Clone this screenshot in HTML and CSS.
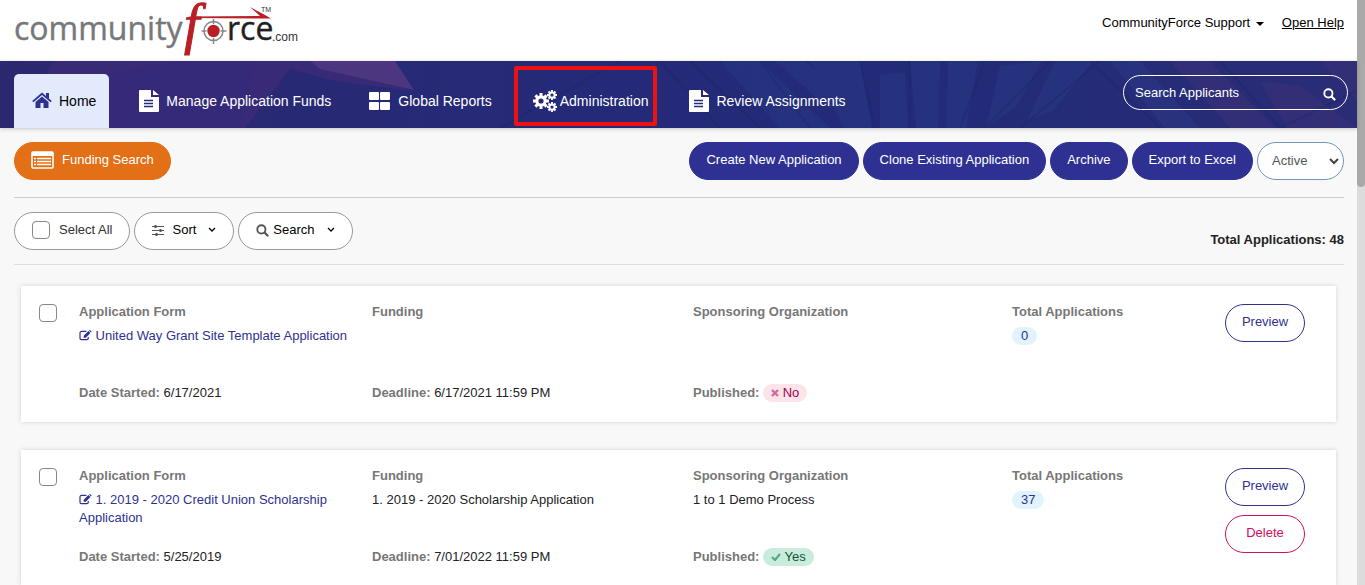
FILE: index.html
```
<!DOCTYPE html>
<html lang="en">
<head>
    <meta charset="UTF-8">
    <meta name="viewport" content="width=device-width, initial-scale=1.0">
    <title>CommunityForce</title>
    <link rel="stylesheet" href="styles.css">
</head>
<body>
    <!-- Shared icons -->
    <svg class="sprite" aria-hidden="true">
        <symbol id="icon-file" viewBox="0 0 20 22">
            <path fill="currentColor" d="M1 0h11v7h8v14a1 1 0 0 1-1 1H1a1 1 0 0 1-1-1V1a1 1 0 0 1 1-1zM14 0l6 5h-6z"/>
            <path stroke="#252a78" stroke-width="1.4" d="M5 10.500h9M5 13.500h9M5 16.500h9"/>
        </symbol>
        <symbol id="icon-search" viewBox="0 0 14 14">
            <circle cx="5.800" cy="5.800" r="4.400" fill="none" stroke="currentColor" stroke-width="2"/>
            <path stroke="currentColor" stroke-width="2.400" stroke-linecap="round" d="M9.400 9.400l3 3"/>
        </symbol>
        <symbol id="icon-chevron" viewBox="0 0 8 6">
            <path fill="none" stroke="currentColor" stroke-width="1.300" d="M1 1l3 3 3-3"/>
        </symbol>
        <symbol id="icon-edit" viewBox="0 0 14 12">
            <path fill="none" stroke="currentColor" stroke-width="1.300" d="M8 1.600H2.500a1.500 1.500 0 0 0-1.500 1.500v6a1.500 1.500 0 0 0 1.500 1.500h6a1.500 1.500 0 0 0 1.500-1.500V7.500"/>
            <path fill="currentColor" d="M10.200 1.200l2.200 2.200L7.300 8.500H5V6.300zM10.900.6l.5-.4q.4-.3.800 0L13.400 1.400q.3.400 0 .8l-.5.500z"/>
        </symbol>
        <symbol id="icon-gear" viewBox="-8 -8 16 16">
            <circle r="4.200" fill="none" stroke="currentColor" stroke-width="3.200"/>
            <path stroke="currentColor" stroke-width="3" d="M0-8v3M0 5v3M-8 0h3M5 0h3M-5.600-5.600l2 2M3.600 3.600l2 2M-5.600 5.600l2-2M3.600-3.600l2-2"/>
        </symbol>
    </svg>

    <div class="page">
        <header class="top-bar">
            <a href="#" class="logo" aria-label="communityforce.com">
                <svg width="290" height="61" viewBox="0 0 290 61">
                    <text class="logo-word" x="0" y="40">community</text>
                    <text class="logo-f" x="170" y="43">f</text>
                    <text class="logo-rce" x="213" y="40">rce</text>
                    <text class="logo-com" x="258" y="41">.com</text>
                    <text class="logo-tm" x="247" y="12">TM</text>
                    <path fill="#b92025" d="M180 16.500l66-.500-10-9 15 8 6 3.500-77-.500z"/>
                    <circle cx="199.500" cy="31" r="9.500" fill="#fff" stroke="#85878a" stroke-width="1.500"/>
                    <path stroke="#85878a" stroke-width="1.500" d="M199.500 19v5M199.500 38v6M187.500 31h5M206.500 31h6"/>
                    <circle cx="199.500" cy="31" r="6.200" fill="#b92025"/>
                </svg>
            </a>
            <div class="user-links">
                <button type="button" class="user-menu">CommunityForce Support <span class="caret"></span></button>
                <a href="#" class="help-link">Open Help</a>
            </div>
        </header>

        <nav class="main-nav">
            <svg class="nav-art" viewBox="0 0 1357 67" preserveAspectRatio="none" aria-hidden="true">
                <path fill="#422b78" opacity=".6" d="M53 0h260l100 30-78-10L290 8 245 67H20z"/>
                <path fill="#4b367f" d="M310 0h85l19 29-94-21z"/>
                <path fill="#35297b" opacity=".7" d="M105 13l80-13h70l-15 67H100z"/>
                <g fill="#2d438d" opacity=".3">
                    <path d="M720 0h40l70 67h-50zM775 0h30l48 42-25 5zM810 0h50l12 67h-28zM880 14l25-3 3 56h-28zM910 0h30l-2 67h-22zM948 0h30l-12 67h-20z"/>
                    <path d="M1000 5l42-5-26 46-30 21zM1055 0h38l-40 50-26 10zM1110 0h30l60 67h-35z"/>
                </g>
                <g fill="#3b3178" opacity=".5">
                    <path d="M1170 0h40l65 67h-45zM1260 20l40 5 57 42h-70zM1320 0h37v40z"/>
                </g>
                <g stroke="#18256a" stroke-width="2" opacity=".3" fill="none">
                    <path d="M500 67L620 0M660 0l60 67M690 0l70 67M760 0l50 67M860 0l15 67M910 0v67M985 0l-25 67M1050 0l-65 67M1100 0l-80 67M1090 0l70 67M1220 0l60 67M1357 30L1280 67"/>
                </g>
            </svg>
            <ul class="nav-list">
                <li>
                    <a href="#" class="nav-link home">
                        <svg width="20" height="18" viewBox="0 0 20 18"><path fill="currentColor" d="M10 4.500l6.500 5.500v6h-5v-5h-3v5h-5v-6z"/><path fill="none" stroke="currentColor" stroke-width="1.800" d="M.8 9.600L10 1.800l9.200 7.800"/><path fill="currentColor" d="M14 1h3v6l-3-2.500z"/></svg>
                        <span>Home</span>
                    </a>
                </li>
                <li>
                    <a href="#" class="nav-link">
                        <svg width="20" height="22"><use href="#icon-file"/></svg>
                        <span>Manage Application Funds</span>
                    </a>
                </li>
                <li>
                    <a href="#" class="nav-link">
                        <svg width="22" height="18" viewBox="0 0 22 18" fill="currentColor"><rect width="10" height="8" rx="1"/><rect x="11" width="10" height="8" rx="1"/><rect y="10" width="10" height="8" rx="1"/><rect x="11" y="10" width="10" height="8" rx="1"/></svg>
                        <span>Global Reports</span>
                    </a>
                </li>
                <li>
                    <a href="#" class="nav-link highlighted">
                        <svg width="24" height="22" viewBox="0 0 24 22"><use href="#icon-gear" x="0" y="3" width="16" height="16"/><use href="#icon-gear" x="14" y="0" width="10" height="10"/><use href="#icon-gear" x="14" y="12" width="10" height="10"/></svg>
                        <span>Administration</span>
                    </a>
                </li>
                <li>
                    <a href="#" class="nav-link">
                        <svg width="20" height="22"><use href="#icon-file"/></svg>
                        <span>Review Assignments</span>
                    </a>
                </li>
            </ul>
            <form class="nav-search">
                <input type="text" aria-label="Search Applicants" placeholder="Search Applicants">
                <button type="button" aria-label="Search"><svg width="13" height="13"><use href="#icon-search"/></svg></button>
            </form>
        </nav>

        <main class="content">
            <div class="toolbar">
                <button type="button" class="btn funding-btn">
                    <svg width="23" height="18" viewBox="0 0 23 18"><rect x="1" y="1" width="21" height="16" rx="1" fill="none" stroke="#fff" stroke-width="1.600"/><path fill="#fff" d="M1 1h21v4H1z"/><path stroke="#fff" stroke-width="1.500" d="M3 7.500h2M6 7.500h14M3 10.500h2M6 10.500h14M3 13.500h2M6 13.500h14"/></svg>
                    Funding Search
                </button>
                <div class="actions">
                    <button type="button" class="btn primary-btn">Create New Application</button>
                    <button type="button" class="btn primary-btn">Clone Existing Application</button>
                    <button type="button" class="btn primary-btn">Archive</button>
                    <button type="button" class="btn primary-btn">Export to Excel</button>
                    <div class="status-box">
                        <select class="status-select" aria-label="Status">
                            <option>Active</option>
                            <option>Archived</option>
                        </select>
                        <svg class="select-arrow" width="10" height="7" viewBox="0 0 10 7"><path fill="none" stroke="#444" stroke-width="2" d="M1 1l4 4 4-4"/></svg>
                    </div>
                </div>
            </div>

            <div class="filters">
                <label class="btn filter-btn select-all"><input type="checkbox" class="check">Select All</label>
                <button type="button" class="btn filter-btn">
                    <svg class="grey-icon" width="12" height="12" viewBox="0 0 12 12"><path stroke="currentColor" d="M0 2.500h12M0 6.500h12M0 10.500h12"/><path stroke="currentColor" stroke-width="2" d="M3.500 1v3M8.500 5v3M4.500 9v3"/></svg>
                    Sort
                    <svg class="chevron" width="8" height="6"><use href="#icon-chevron"/></svg>
                </button>
                <button type="button" class="btn filter-btn search-btn">
                    <svg class="grey-icon" width="13" height="13"><use href="#icon-search"/></svg>
                    Search
                    <svg class="chevron" width="8" height="6"><use href="#icon-chevron"/></svg>
                </button>
                <strong class="total">Total Applications: 48</strong>
            </div>

            <div class="cards">
                <section class="card">
                    <input type="checkbox" class="check" aria-label="Select United Way Grant Site Template Application">
                    <div class="field">
                        <h3>Application Form</h3>
                        <p class="value"><a href="#"><svg width="13" height="11"><use href="#icon-edit"/></svg> United Way Grant Site Template Application</a></p>
                        <p><b>Date Started:</b> 6/17/2021</p>
                    </div>
                    <div class="field">
                        <h3>Funding</h3>
                        <p class="value"></p>
                        <p><b>Deadline:</b> 6/17/2021 11:59 PM</p>
                    </div>
                    <div class="field">
                        <h3>Sponsoring Organization</h3>
                        <p class="value"></p>
                        <p><b>Published:</b> <span class="badge no"><svg width="8" height="8" viewBox="0 0 8 8"><path stroke="#cf6aa0" stroke-width="2.400" d="M1 1l6 6M7 1L1 7"/></svg> No</span></p>
                    </div>
                    <div class="field">
                        <h3>Total Applications</h3>
                        <p class="value"><span class="badge count">0</span></p>
                    </div>
                    <div class="card-actions">
                        <button type="button" class="btn preview-btn">Preview</button>
                    </div>
                </section>

                <section class="card">
                    <input type="checkbox" class="check" aria-label="Select 1. 2019 - 2020 Credit Union Scholarship Application">
                    <div class="field">
                        <h3>Application Form</h3>
                        <p class="value"><a href="#"><svg width="13" height="11"><use href="#icon-edit"/></svg> 1. 2019 - 2020 Credit Union Scholarship Application</a></p>
                        <p><b>Date Started:</b> 5/25/2019</p>
                    </div>
                    <div class="field">
                        <h3>Funding</h3>
                        <p class="value">1. 2019 - 2020 Scholarship Application</p>
                        <p><b>Deadline:</b> 7/01/2022 11:59 PM</p>
                    </div>
                    <div class="field">
                        <h3>Sponsoring Organization</h3>
                        <p class="value">1 to 1 Demo Process</p>
                        <p><b>Published:</b> <span class="badge yes"><svg width="10" height="8" viewBox="0 0 10 8"><path fill="none" stroke="#57a887" stroke-width="2.200" d="M1 4l3 3 5-6"/></svg> Yes</span></p>
                    </div>
                    <div class="field">
                        <h3>Total Applications</h3>
                        <p class="value"><span class="badge count">37</span></p>
                    </div>
                    <div class="card-actions">
                        <button type="button" class="btn preview-btn">Preview</button>
                        <button type="button" class="btn delete-btn">Delete</button>
                    </div>
                </section>
            </div>
        </main>
    </div>

    <div class="scroll-track"><div class="scroll-thumb"></div></div>
</body>
</html>
```
FILE: styles.css
```
* {
    margin: 0;
    padding: 0;
    box-sizing: border-box;
}

body {
    display: flex;
    height: 100vh;
    overflow: hidden;
    background-color: #f8f8f8;
    color: #222;
    font-family: "Liberation Sans", Arial, sans-serif;
    font-size: 13px;
    line-height: 18px;
}

button,
input,
select {
    font: inherit;
    color: inherit;
}

button {
    cursor: pointer;
}

.sprite {
    position: absolute;
    width: 0;
    height: 0;
}

.page {
    flex: 1;
    min-width: 0;
}

/* Scroll bar */
.scroll-track {
    width: 8px;
    background-color: #dcdcdc;
}

.scroll-thumb {
    height: 32%;
    background-color: #a9a9a9;
    border-radius: 0 0 4px 4px;
}

/* Top bar */
.top-bar {
    display: flex;
    justify-content: space-between;
    height: 61px;
    padding: 0 13px 0 14px;
    background-color: #fff;
}

.logo svg {
    display: block;
    overflow: visible;
}

.logo-word,
.logo-rce {
    font-family: "Open Sans", "Noto Sans", sans-serif;
    font-size: 32px;
    fill: #77787b;
    stroke: #77787b;
    stroke-width: 0.4px;
}

.logo-rce {
    fill: #231f20;
    stroke: #231f20;
}

.logo-f {
    font-family: "Liberation Serif", serif;
    font-size: 56px;
    font-style: italic;
    fill: #b92025;
    stroke: #b92025;
    stroke-width: 1px;
}

.logo-com {
    font-size: 12px;
    fill: #333;
}

.logo-tm {
    font-size: 7px;
    fill: #333;
}

.user-links {
    display: flex;
    align-items: flex-start;
    gap: 18px;
    padding-top: 14px;
    color: #000;
}

.user-menu {
    background: none;
    border: none;
}

.caret {
    display: inline-block;
    margin-left: 2px;
    vertical-align: middle;
    border: 4px solid transparent;
    border-top-color: #000;
    border-bottom: none;
}

.help-link {
    color: #000;
}

/* Navigation */
.main-nav {
    position: relative;
    display: flex;
    justify-content: space-between;
    height: 67px;
    padding: 0 9px 0 14px;
    background: linear-gradient(90deg, #2c2870, #252a78 40%, #222b78 70%, #2a2c76);
    box-shadow: 0 1px 4px rgba(0, 0, 0, 0.2);
}

.nav-art {
    position: absolute;
    top: 0;
    left: 0;
    width: 100%;
    height: 100%;
}

.nav-list {
    position: relative;
    display: flex;
    align-items: flex-end;
    list-style: none;
}

.nav-link {
    display: flex;
    align-items: center;
    gap: 7px;
    height: 54px;
    padding: 0 19px;
    color: #fff;
    font-size: 14px;
    text-decoration: none;
}

.nav-link.home {
    margin-right: 11px;
    padding: 0 13px 0 18px;
    background-color: #e2eafc;
    border-radius: 5px 5px 0 0;
}

.nav-link.home svg {
    color: #2e3192;
}

.nav-link.home span {
    color: #000;
}

.nav-link.highlighted {
    position: relative;
    gap: 3px;
    padding: 0 22px;
}

.nav-link.highlighted::after {
    content: "";
    position: absolute;
    inset: -8px 13px 2px 3px;
    border: 4px solid #ee1111;
    border-radius: 2px;
}

.nav-search {
    position: relative;
    display: flex;
    align-items: center;
    width: 225px;
    height: 35px;
    margin-top: 14px;
    padding: 0 11px;
    border: 1px solid #fff;
    border-radius: 18px;
    color: #fff;
}

.nav-search input {
    flex: 1;
    min-width: 0;
    background: none;
    border: none;
}

.nav-search input::placeholder {
    color: #fff;
    opacity: 1;
}

.nav-search button {
    display: flex;
    background: none;
    border: none;
    padding-top: 3px;
}

/* Toolbar */
.content {
    padding: 0 13px 0 14px;
}

.btn {
    display: flex;
    align-items: center;
    justify-content: center;
    height: 38px;
    padding: 0 16px 2px;
    border: 1px solid #2e3192;
    border-radius: 20px;
    background-color: #fff;
    white-space: nowrap;
}

.toolbar {
    display: flex;
    justify-content: space-between;
    padding: 14px 0 17px;
    border-bottom: 1px solid #ccc;
}

.actions {
    display: flex;
    gap: 4px;
}

.funding-btn {
    gap: 8px;
    background-color: #e36f17;
    border-color: #e36f17;
    color: #fff;
}

.primary-btn {
    background-color: #2e3192;
    color: #fff;
}

.status-box {
    position: relative;
}

.status-select {
    width: 87px;
    height: 38px;
    padding: 0 14px;
    appearance: none;
    background-color: #fff;
    border: 1px solid #7096b8;
    border-radius: 20px;
    color: #555;
}

.select-arrow {
    position: absolute;
    top: 16px;
    right: 5px;
    pointer-events: none;
}

/* Filters */
.filters {
    display: flex;
    gap: 4px;
    padding: 14px 0;
    border-bottom: 1px solid #ddd;
}

.filter-btn {
    gap: 8px;
    padding: 0 17px 2px;
    border-color: #999;
    color: #000;
}

.search-btn {
    gap: 4px;
}

.select-all {
    gap: 9px;
    color: #333;
}

.grey-icon {
    color: #555;
}

.chevron {
    margin-left: 4px;
}

.search-btn .chevron {
    margin-left: 8px;
}

.check {
    width: 18px;
    height: 18px;
    appearance: none;
    background-color: #fff;
    border: 1px solid #888;
    border-radius: 4px;
}

.total {
    margin: 19px 0 0 auto;
}

/* Application cards */
.cards {
    display: flex;
    flex-direction: column;
    gap: 28px;
    padding: 21px 8px 21px 7px;
}

.card {
    display: grid;
    grid-template-columns: 40px 293fr 321fr 319fr 213fr 80px;
    padding: 17px 31px 20px 18px;
    background-color: #fff;
    box-shadow: 0 0 5px rgba(0, 0, 0, 0.15);
}

.card .check {
    margin-top: 1px;
}

.field {
    padding-right: 20px;
}

.field h3 {
    margin-bottom: 6px;
    font-size: 13px;
}

.field h3,
.field b {
    color: #777;
}

.value {
    min-height: 57px;
}

.value a {
    color: #2e3192;
    text-decoration: none;
}

.value a svg {
    vertical-align: -1px;
}

.badge {
    display: inline-block;
    padding: 0 8px;
    border-radius: 10px;
}

.no {
    background-color: #fce4e9;
    color: #a3004f;
}

.yes {
    background-color: #c9ecdc;
    color: #10543a;
}

.count {
    padding: 0 9px;
    background-color: #e1f3fd;
    color: #2e3192;
}

.card-actions {
    display: flex;
    flex-direction: column;
    gap: 9px;
    padding-top: 1px;
}

.card-actions .btn {
    padding: 0 0 2px;
}

.preview-btn {
    color: #2e3192;
}

.delete-btn {
    border-color: #d40d5c;
    color: #d40d5c;
}
```
